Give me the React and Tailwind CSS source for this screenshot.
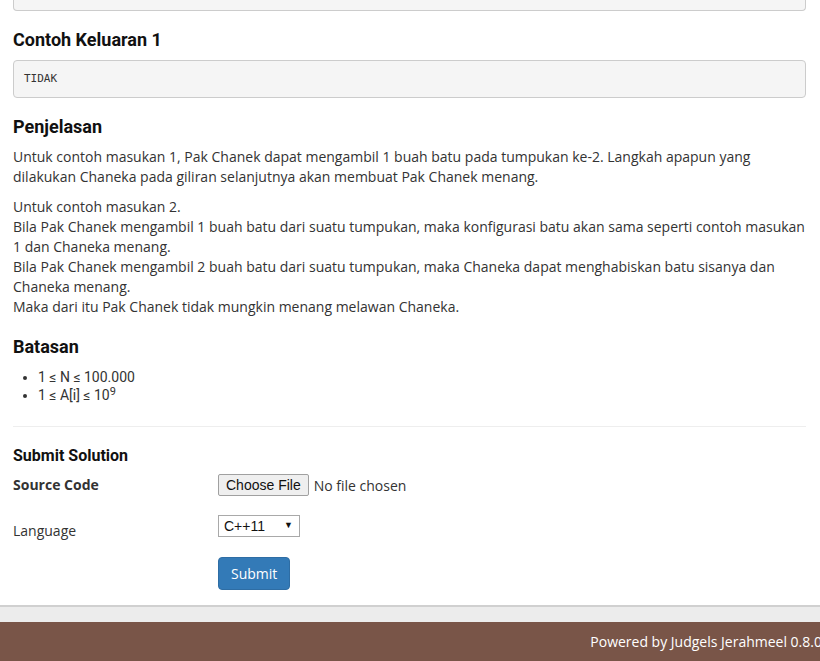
export default function App() {
  const body = { fontFamily: '"Open Sans", "Liberation Sans", sans-serif' };
  const head = { fontFamily: 'Roboto, "Liberation Sans", sans-serif' };
  return (
    <div className="min-h-screen bg-[#ececec]" style={body}>
      <div className="bg-white border-b-2 border-[#d0d0d0] pl-[13px] pr-[14px] pb-[15px]">
        <div className="h-[11px] border-x border-b border-[#cccccc] rounded-b-[4px] bg-[#f5f5f5]" />
        <h4 className="mt-[19px] mb-[10px] text-[18px] leading-[20px] font-bold text-[#111]" style={head}>
          Contoh Keluaran 1
        </h4>
        <div
          className="h-[38px] border border-[#cccccc] rounded-[4px] bg-[#f5f5f5] px-[10px] py-[9px] text-[11px] leading-[18px] text-[#333]"
          style={{ fontFamily: '"DejaVu Sans Mono", "Liberation Mono", monospace' }}
        >
          TIDAK
        </div>
        <h4 className="mt-[19px] mb-[10px] text-[18px] leading-[20px] font-bold text-[#111]" style={head}>
          Penjelasan
        </h4>
        <p className="text-[14px] leading-[20px] text-[#333] whitespace-nowrap mb-[10px]">
          Untuk contoh masukan 1, Pak Chanek dapat mengambil 1 buah batu pada tumpukan ke-2. Langkah apapun yang
          <br />
          dilakukan Chaneka pada giliran selanjutnya akan membuat Pak Chanek menang.
        </p>
        <p className="text-[14px] leading-[20px] text-[#333] whitespace-nowrap">
          Untuk contoh masukan 2.
          <br />
          Bila Pak Chanek mengambil 1 buah batu dari suatu tumpukan, maka konfigurasi batu akan sama seperti contoh masukan
          <br />
          1 dan Chaneka menang.
          <br />
          Bila Pak Chanek mengambil 2 buah batu dari suatu tumpukan, maka Chaneka dapat menghabiskan batu sisanya dan
          <br />
          Chaneka menang.
          <br />
          Maka dari itu Pak Chanek tidak mungkin menang melawan Chaneka.
        </p>
        <h4 className="mt-[20px] mb-[11px] text-[18px] leading-[20px] font-bold text-[#111]" style={head}>
          Batasan
        </h4>
        <ul className="list-disc pl-[25px] text-[14px] leading-[18px] text-[#333]" style={head}>
          <li>1 ≤ N ≤ 100.000</li>
          <li>
            1 ≤ A[i] ≤ 10<sup className="text-[11px]">9</sup>
          </li>
        </ul>
        <div className="mt-[22px] border-t border-[#eeeeee]" />
        <h5 className="mt-[19px] text-[16px] leading-[20px] font-bold text-[#111]" style={head}>
          Submit Solution
        </h5>
        <div className="mt-[8px] flex">
          <div className="w-[205px] text-[14px] leading-[20px] font-bold text-[#333] pt-[1px]">Source Code</div>
          <div className="flex items-center">
            <span
              className="h-[22px] px-[7px] border border-[#a0a0a0] rounded-[2px] bg-[#efefef] text-[14px] leading-[20px] text-[#111]"
              style={{ fontFamily: '"Liberation Sans", Arial, sans-serif' }}
            >
              Choose File
            </span>
            <span className="ml-[5px] text-[14px] text-[#333]">No file chosen</span>
          </div>
        </div>
        <div className="mt-[19px] flex">
          <div className="w-[205px] text-[14px] leading-[20px] text-[#333] pt-[6px]">Language</div>
          <div
            className="w-[82px] h-[22px] border border-[#a9a9a9] bg-white flex items-center justify-between pl-[5px] pr-[6px] text-[14px] text-[#111]"
            style={{ fontFamily: '"Liberation Sans", Arial, sans-serif' }}
          >
            <span>C++11</span>
            <span className="text-[9px]">▼</span>
          </div>
        </div>
        <div className="mt-[16px] pl-[205px]">
          <button className="h-[33px] px-[12px] rounded-[4px] bg-[#337ab7] border border-[#2e6da4] text-white text-[14px] leading-[20px]">
            Submit
          </button>
        </div>
      </div>
      <div className="h-[15px]" />
      <div className="h-[39px] bg-[#795548] flex items-center justify-end text-white text-[14px] whitespace-nowrap">
        <span className="mr-[-2px]">Powered by Judgels Jerahmeel 0.8.0</span>
      </div>
    </div>
  );
}
